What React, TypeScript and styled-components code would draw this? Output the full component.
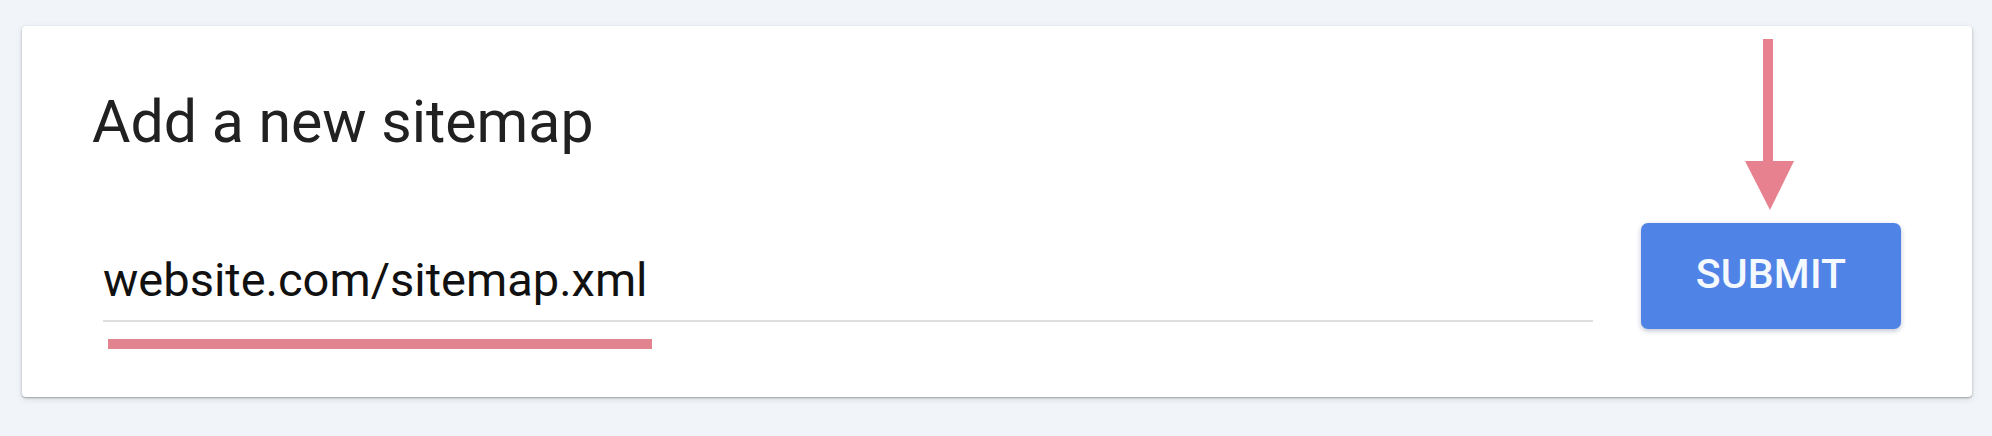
import React from 'react'
import styled, { createGlobalStyle } from 'styled-components'

const GlobalStyle = createGlobalStyle`
  html, body {
    margin: 0;
    padding: 0;
    background: #f1f4f9;
  }
  body {
    font-family: Roboto, 'Noto Sans', sans-serif;
  }
`

const Page = styled.div`
  width: 1992px;
  height: 436px;
  box-sizing: border-box;
  padding: 26px 20px 0 22px;
  background: #f1f4f9;
`

const Card = styled.section`
  background: #ffffff;
  border-radius: 4px;
  box-shadow: 0 1px 2px rgba(0, 0, 0, 0.3), 0 2px 6px rgba(60, 64, 67, 0.14);
  padding: 60px 71px 48px 70px;
`

const Title = styled.h2`
  margin: 0;
  font-family: Roboto, sans-serif;
  font-weight: 400;
  font-size: 59px;
  line-height: 72px;
  color: #212121;
`

const FormRow = styled.div`
  display: flex;
  align-items: flex-start;
  gap: 48px;
  margin-top: 65px;
`

const Field = styled.div`
  flex: 1;
  display: flex;
  flex-direction: column;
  padding-top: 29px;
  margin-left: 11px;
`

const UrlInput = styled.input`
  display: block;
  width: 100%;
  box-sizing: content-box;
  height: 56px;
  padding: 0 0 12px 0;
  margin: 0;
  border: none;
  border-bottom: 2px solid #dedede;
  outline: none;
  background: transparent;
  font-family: Roboto, sans-serif;
  font-size: 47px;
  line-height: 56px;
  color: #111111;
`

// pink marker drawn under the typed url
const Highlight = styled.div<{ $width: number }>`
  width: ${({ $width }) => $width}px;
  height: 10px;
  margin: 17px 0 0 5px;
  background: #e1848f;
`

const ButtonWrap = styled.div`
  position: relative;
  flex-shrink: 0;
`

const SubmitButton = styled.button`
  display: flex;
  align-items: center;
  justify-content: center;
  width: 260px;
  height: 106px;
  padding: 0 0 4px 0;
  border: none;
  border-radius: 7px;
  background: #5083e6;
  box-shadow: 0 2px 5px rgba(40, 60, 110, 0.3);
  color: #f4f8ff;
  font-family: Roboto, sans-serif;
  font-weight: 500;
  font-size: 41px;
  letter-spacing: 0.2px;
  cursor: pointer;
`

const Pointer = styled.svg`
  position: absolute;
  left: 104px;
  top: -184px;
`

function DownArrow() {
  return (
    <Pointer width="49" height="171" viewBox="0 0 49 171">
      <rect x="18" y="0" width="10" height="124" fill="#e8818f" />
      <polygon points="0,122 49,122 25,171" fill="#e8818f" />
    </Pointer>
  )
}

export default function App() {
  return (
    <>
      <GlobalStyle />
      <Page>
        <Card>
          <Title>Add a new sitemap</Title>
          <FormRow>
            <Field>
              <UrlInput readOnly value="website.com/sitemap.xml" />
              <Highlight $width={544} />
            </Field>
            <ButtonWrap>
              <DownArrow />
              <SubmitButton>SUBMIT</SubmitButton>
            </ButtonWrap>
          </FormRow>
        </Card>
      </Page>
    </>
  )
}
